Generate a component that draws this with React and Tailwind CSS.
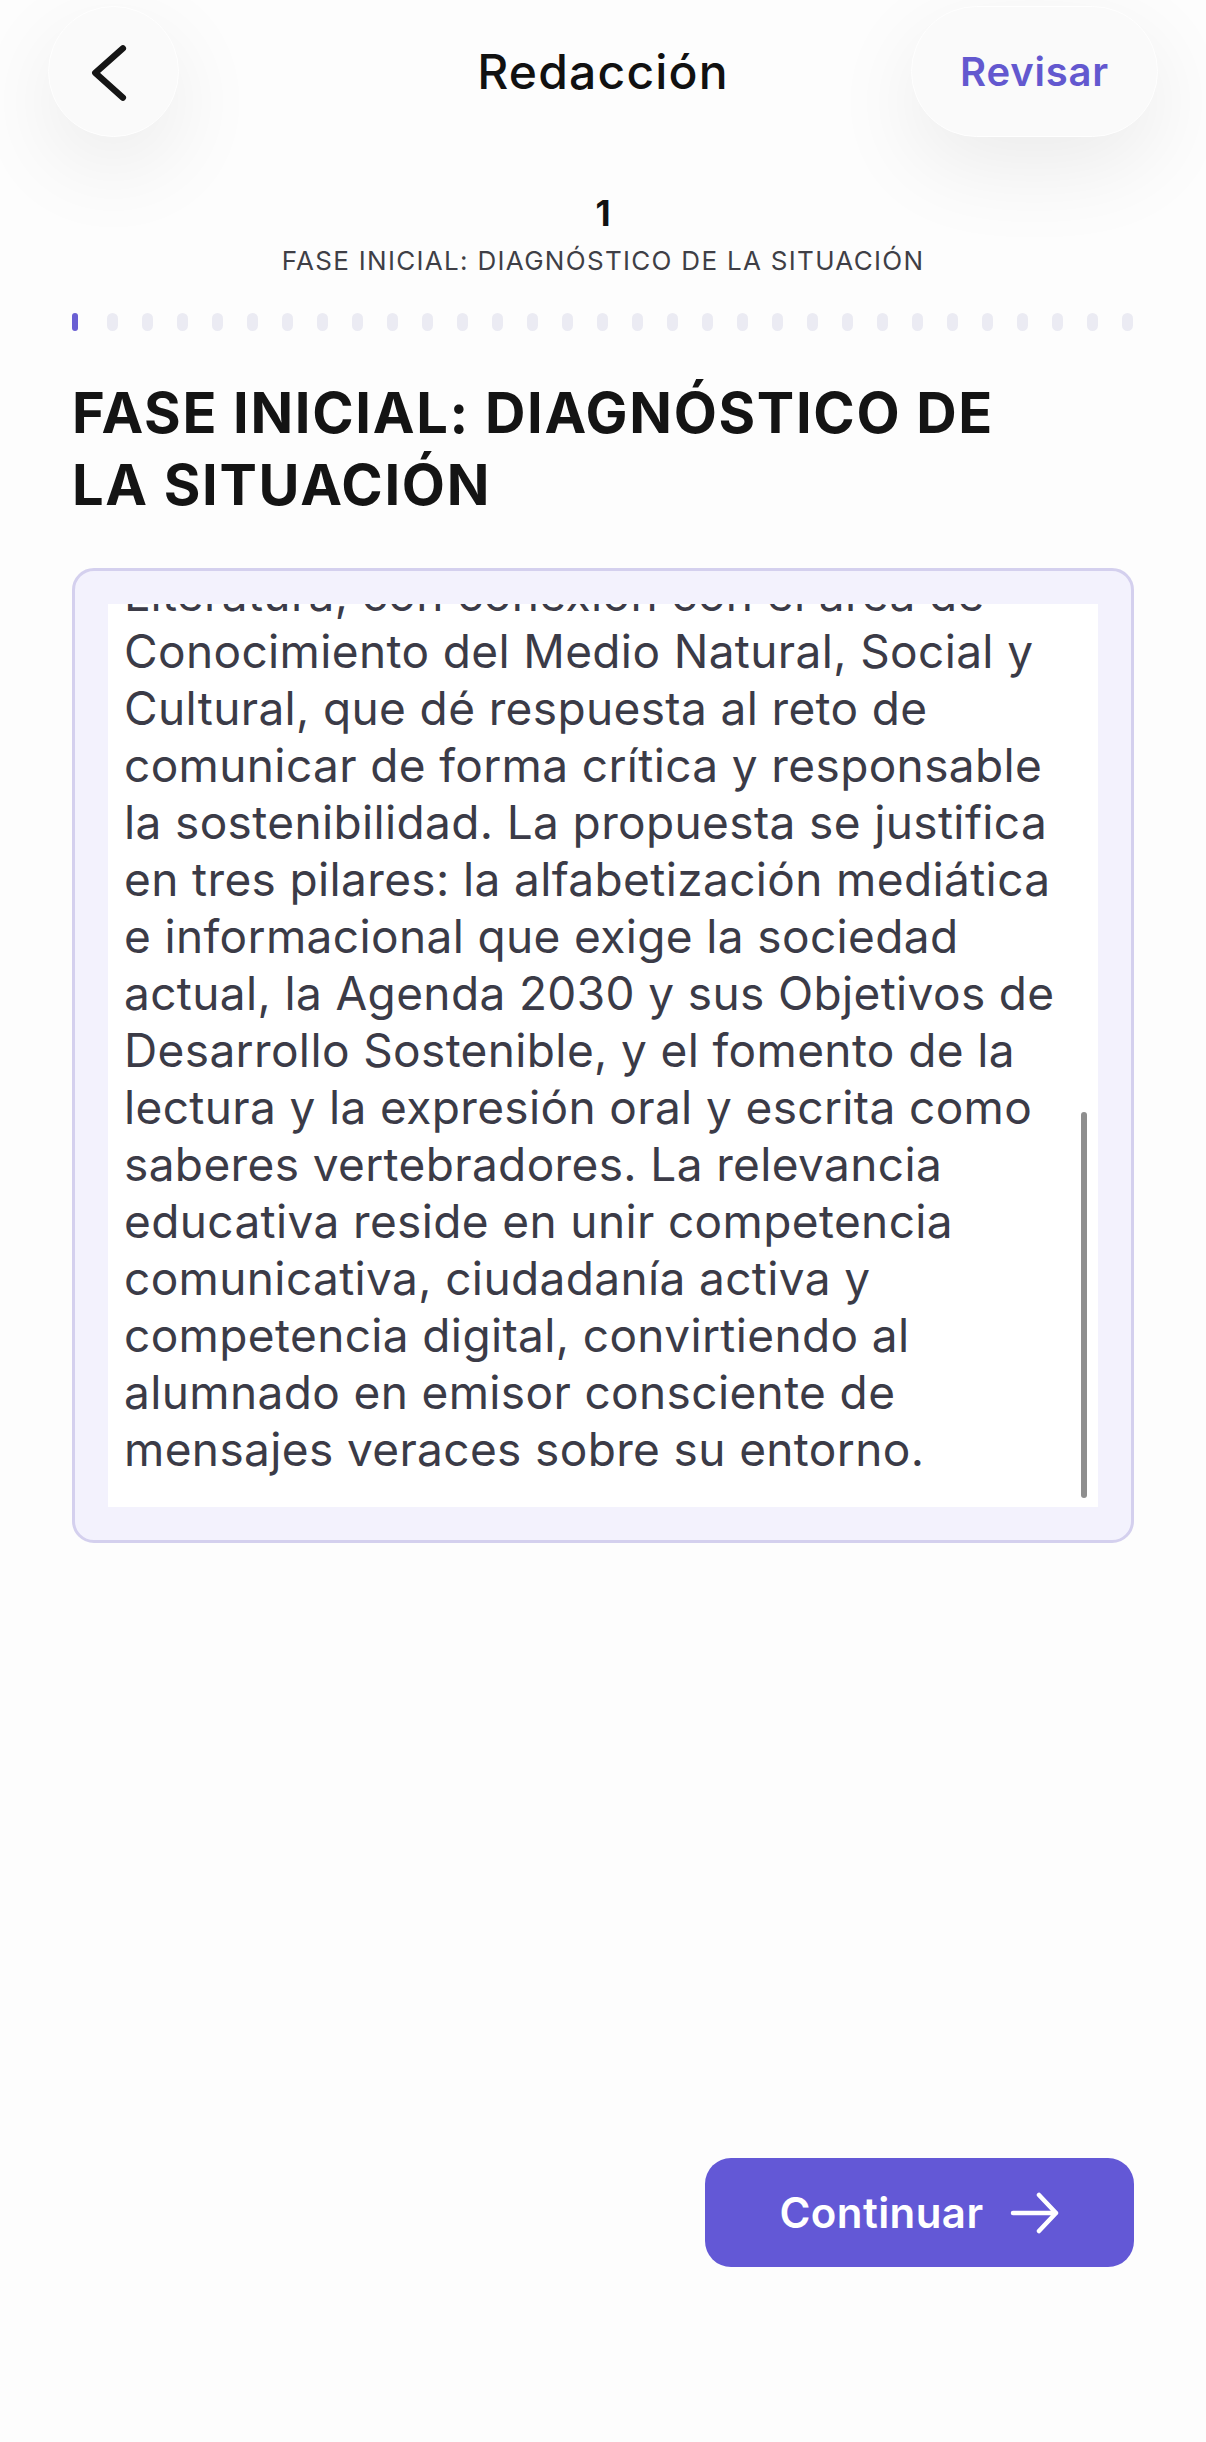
const lines = [
  'Literatura, con conexión con el área de',
  'Conocimiento del Medio Natural, Social y',
  'Cultural, que dé respuesta al reto de',
  'comunicar de forma crítica y responsable',
  'la sostenibilidad. La propuesta se justifica',
  'en tres pilares: la alfabetización mediática',
  'e informacional que exige la sociedad',
  'actual, la Agenda 2030 y sus Objetivos de',
  'Desarrollo Sostenible, y el fomento de la',
  'lectura y la expresión oral y escrita como',
  'saberes vertebradores. La relevancia',
  'educativa reside en unir competencia',
  'comunicativa, ciudadanía activa y',
  'competencia digital, convirtiendo al',
  'alumnado en emisor consciente de',
  'mensajes veraces sobre su entorno.',
]

const dots = Array.from({ length: 31 }, (_, i) => i)

export default function App() {
  return (
    <div className="flex h-[2442px] w-[1206px] flex-col bg-[#fdfdfd] font-['Inter',sans-serif] text-[#111]">
      {/* header */}
      <div className="grid grid-cols-[1fr_auto_1fr] items-center px-[48px] pt-[6px]">
        <div className="flex">
          <button className="flex h-[131px] w-[131px] items-center justify-center rounded-full border border-white bg-[#fafafa] shadow-[0_30px_90px_rgba(0,0,0,0.075)]">
            <svg width="131" height="131" viewBox="0 0 131 131" fill="none">
              <path d="M75 42 L47 67 L75 92" stroke="#151515" strokeWidth="6.5" strokeLinecap="round" strokeLinejoin="round" />
            </svg>
          </button>
        </div>
        <h1 className="text-[48px] font-medium leading-none tracking-[0.025em]">Redacción</h1>
        <div className="flex justify-end">
          <button className="flex h-[131px] w-[247px] items-center justify-center rounded-full border border-white bg-[#fafafa] text-[40px] font-semibold tracking-[0.02em] text-[#6358cf] shadow-[0_30px_90px_rgba(0,0,0,0.075)]">
            Revisar
          </button>
        </div>
      </div>

      {/* step */}
      <div className="mt-[58px] text-center text-[35px] font-bold leading-[36px]">1</div>
      <div className="mt-[14px] text-center text-[26px] leading-[32px] tracking-[0.05em] text-[#3f3f46]">
        FASE INICIAL: DIAGNÓSTICO DE LA SITUACIÓN
      </div>

      {/* progress dots */}
      <div className="mt-[36px] flex gap-[24px] px-[72px]">
        {dots.map((i) =>
          i === 0 ? (
            <div key={i} className="flex h-[18px] w-[11px]">
              <div className="h-[18px] w-[6px] rounded-full bg-[#6a5fd3]" />
            </div>
          ) : (
            <div key={i} className="h-[18px] w-[11px] rounded-full bg-[#ebebf3]" />
          )
        )}
      </div>

      <h2 className="mt-[46px] px-[72px] text-[56px] font-bold leading-[72px] tracking-[0.03em] text-[#141414]">
        FASE INICIAL: DIAGNÓSTICO DE
        <br />
        LA SITUACIÓN
      </h2>

      {/* text box */}
      <div className="mx-[72px] mt-[47px] rounded-[22px] border-[3px] border-[#d4d0ee] bg-[#f3f2fd] p-[33px]">
        <div className="relative h-[903px] overflow-hidden bg-white pl-[16px]">
          <div className="-mt-[38px] text-[46px] leading-[57px] tracking-[0.008em] text-[#3b3b47]">
            {lines.map((l) => (
              <div key={l} className="whitespace-nowrap">{l}</div>
            ))}
          </div>
          <div className="absolute right-[11px] top-[508px] h-[386px] w-[6px] rounded-full bg-[#8e8e8e]" />
        </div>
      </div>

      {/* footer */}
      <div className="mt-auto flex justify-end px-[72px] pb-[175px]">
        <button className="flex h-[109px] w-[429px] items-center justify-center gap-[26px] rounded-[26px] bg-[#6358d6] text-[42px] font-semibold tracking-[0.01em] text-white">
          Continuar
          <svg width="50" height="42" viewBox="0 0 50 42" fill="none">
            <path d="M3 21 H46 M29 3 L46 21 L29 39" stroke="white" strokeWidth="4.5" strokeLinecap="round" strokeLinejoin="round" />
          </svg>
        </button>
      </div>
    </div>
  )
}
